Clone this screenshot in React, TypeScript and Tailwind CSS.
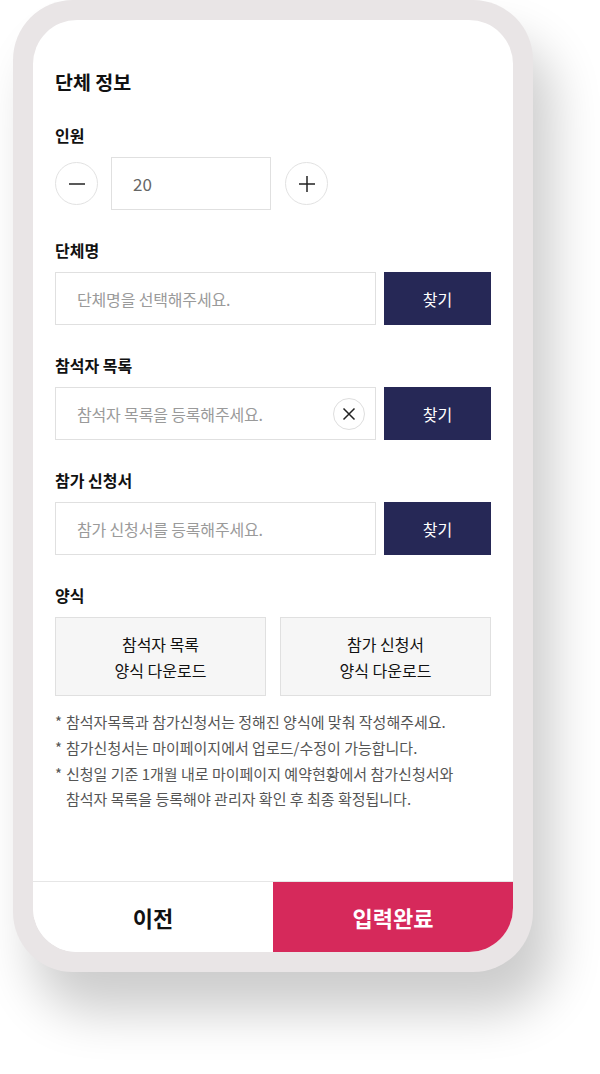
import React from "react";

const font = { fontFamily: '"Noto Sans CJK KR", "Noto Sans", sans-serif' };

const Label: React.FC<{ children: React.ReactNode }> = ({ children }) => (
  <div className="text-[16px] font-bold leading-6 text-[#111]">{children}</div>
);

const FileRow: React.FC<{ placeholder: string; clearable?: boolean }> = ({ placeholder, clearable }) => (
  <div className="flex gap-2 mt-2.5">
    <div className="flex-1 h-[53px] border border-[#e0e0e0] flex items-center pl-[21px] pr-[10px]">
      <span className="flex-1 text-[16px] text-[#9a9a9a] tracking-[-0.01em]">{placeholder}</span>
      {clearable && (
        <button className="w-[32px] h-[32px] rounded-full border border-[#dedede] flex items-center justify-center">
          <svg width="14" height="14" viewBox="0 0 14 14" fill="none" stroke="#222" strokeWidth="1.5">
            <path d="M1.5 1.5l11 11M12.5 1.5l-11 11" />
          </svg>
        </button>
      )}
    </div>
    <button className="w-[107px] h-[53px] bg-[#262856] text-white text-[16px]">찾기</button>
  </div>
);

export default function App() {
  return (
    <div className="min-h-[1074px] bg-white pl-[13px]" style={font}>
      <div className="w-[520px] h-[972px] bg-[#e9e5e6] rounded-[60px] p-[20px] shadow-[20px_40px_50px_rgba(0,0,0,0.2)]">
        <div className="w-full h-full bg-white rounded-[44px] overflow-hidden flex flex-col">
          <div className="px-[22px] pt-[48px] flex-1">
            <div className="text-[19.5px] font-bold leading-7 text-[#111]">단체 정보</div>

            <div className="mt-[27px]">
              <Label>인원</Label>
              <div className="flex items-center mt-2.5">
                <button className="w-[43px] h-[43px] rounded-full border border-[#e2e2e2] flex items-center justify-center">
                  <svg width="18" height="18" viewBox="0 0 18 18" stroke="#222" strokeWidth="1.5">
                    <path d="M1 9h16" />
                  </svg>
                </button>
                <div className="ml-[13px] w-[160px] h-[53px] border border-[#e0e0e0] flex items-center pl-[21px] text-[17px] text-[#666]">
                  20
                </div>
                <button className="ml-[14px] w-[43px] h-[43px] rounded-full border border-[#e2e2e2] flex items-center justify-center">
                  <svg width="18" height="18" viewBox="0 0 18 18" stroke="#222" strokeWidth="1.5">
                    <path d="M1 9h16M9 1v16" />
                  </svg>
                </button>
              </div>
            </div>

            <div className="mt-[28px]">
              <Label>단체명</Label>
              <FileRow placeholder="단체명을 선택해주세요." />
            </div>

            <div className="mt-[28px]">
              <Label>참석자 목록</Label>
              <FileRow placeholder="참석자 목록을 등록해주세요." clearable />
            </div>

            <div className="mt-[28px]">
              <Label>참가 신청서</Label>
              <FileRow placeholder="참가 신청서를 등록해주세요." />
            </div>

            <div className="mt-[28px]">
              <Label>양식</Label>
              <div className="grid grid-cols-2 gap-[14px] mt-2.5">
                <button className="h-[79px] bg-[#f6f6f6] border border-[#e0e0e0] text-[16px] leading-[26px] text-[#111]">
                  참석자 목록
                  <br />
                  양식 다운로드
                </button>
                <button className="h-[79px] bg-[#f6f6f6] border border-[#e0e0e0] text-[16px] leading-[26px] text-[#111]">
                  참가 신청서
                  <br />
                  양식 다운로드
                </button>
              </div>
            </div>

            <ul className="mt-[13px] text-[15px] leading-[25.8px] text-[#555]">
              <li className="flex">
                <span className="w-[11px] shrink-0">*</span>
                <span>참석자목록과 참가신청서는 정해진 양식에 맞춰 작성해주세요.</span>
              </li>
              <li className="flex">
                <span className="w-[11px] shrink-0">*</span>
                <span>참가신청서는 마이페이지에서 업로드/수정이 가능합니다.</span>
              </li>
              <li className="flex">
                <span className="w-[11px] shrink-0">*</span>
                <span>
                  신청일 기준 1개월 내로 마이페이지 예약현황에서 참가신청서와
                  <br />
                  참석자 목록을 등록해야 관리자 확인 후 최종 확정됩니다.
                </span>
              </li>
            </ul>
          </div>

          <div className="flex h-[71px] border-t border-[#e6e6e6]">
            <button className="flex-1 bg-white text-[22px] font-bold text-[#111]">이전</button>
            <button className="flex-1 bg-[#d6295b] text-[22px] font-bold text-white">입력완료</button>
          </div>
        </div>
      </div>
    </div>
  );
}
